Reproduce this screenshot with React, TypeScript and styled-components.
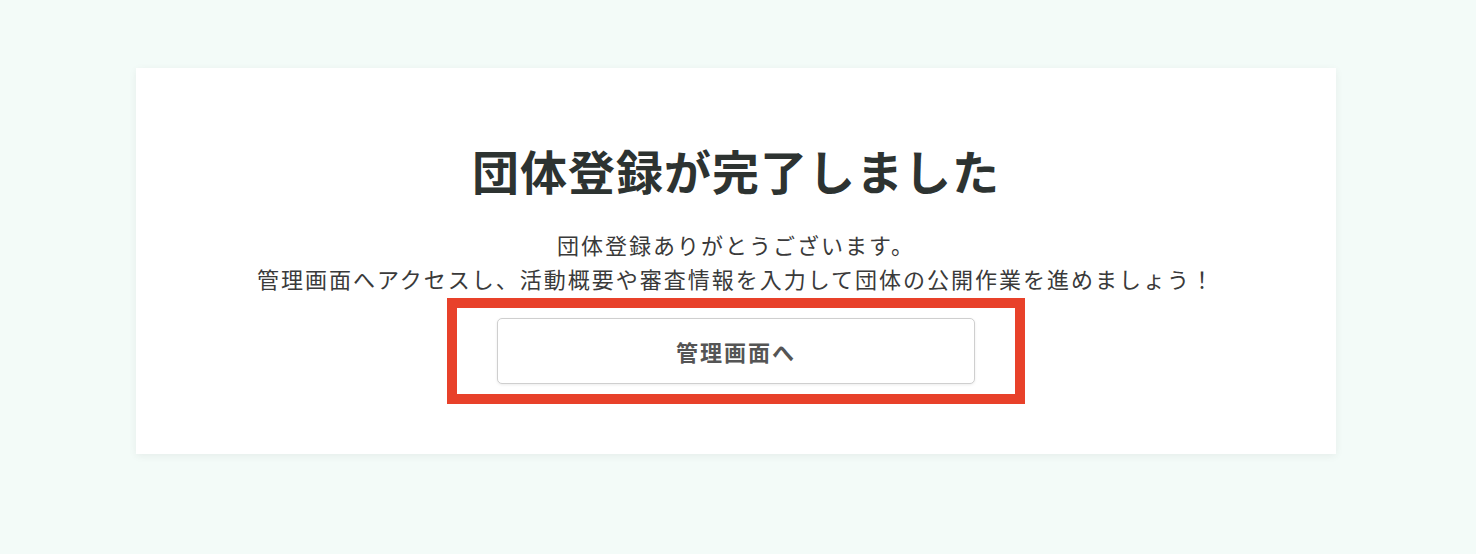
import React from 'react';
import styled, { createGlobalStyle } from 'styled-components';

const COLORS = {
  background: '#f3fbf8',
  card: '#ffffff',
  title: '#2d3331',
  text: '#3a3a3a',
  buttonText: '#555555',
  buttonBorder: '#cfcfcf',
  highlight: '#e8412a',
};

const GlobalStyle = createGlobalStyle`
  html, body {
    margin: 0;
    padding: 0;
    background-color: ${COLORS.background};
    font-family: 'Noto Sans CJK JP', 'Noto Sans', sans-serif;
  }
`;

const Wrapper = styled.main`
  min-height: 554px;
  padding: 68px 0 0;
  box-sizing: border-box;
`;

const Card = styled.section`
  display: flex;
  flex-direction: column;
  align-items: center;
  width: 1200px;
  margin: 0 0 0 136px;
  padding: 66px 0 50px;
  box-sizing: border-box;
  background-color: ${COLORS.card};
  box-shadow: 0 2px 8px rgba(0, 0, 0, 0.06);
`;

const Title = styled.h1`
  margin: 0;
  color: ${COLORS.title};
  font-size: 47px;
  font-weight: 700;
  line-height: 72px;
  letter-spacing: 1px;
`;

const Message = styled.p`
  margin: 21px 0 0;
  color: ${COLORS.text};
  font-size: 22px;
  font-weight: 400;
  line-height: 34px;
  letter-spacing: 2px;
  text-align: center;
`;

const Highlight = styled.div`
  margin-top: 3px;
  padding: 10px 40px;
  border: 10px solid ${COLORS.highlight};
`;

const Button = styled.a`
  display: flex;
  justify-content: center;
  align-items: center;
  width: 478px;
  height: 66px;
  box-sizing: border-box;
  border: 1px solid ${COLORS.buttonBorder};
  border-radius: 5px;
  background-color: #ffffff;
  box-shadow: 0 1px 3px rgba(0, 0, 0, 0.08);
  color: ${COLORS.buttonText};
  font-size: 22px;
  font-weight: 700;
  letter-spacing: 2px;
  text-decoration: none;
  cursor: pointer;
`;

const App: React.FC = () => {
  return (
    <Wrapper>
      <GlobalStyle />
      <Card>
        <Title>団体登録が完了しました</Title>
        <Message>
          団体登録ありがとうございます。
          <br />
          管理画面へアクセスし、活動概要や審査情報を入力して団体の公開作業を進めましょう！
        </Message>
        <Highlight>
          <Button href="#">管理画面へ</Button>
        </Highlight>
      </Card>
    </Wrapper>
  );
};

export default App;
